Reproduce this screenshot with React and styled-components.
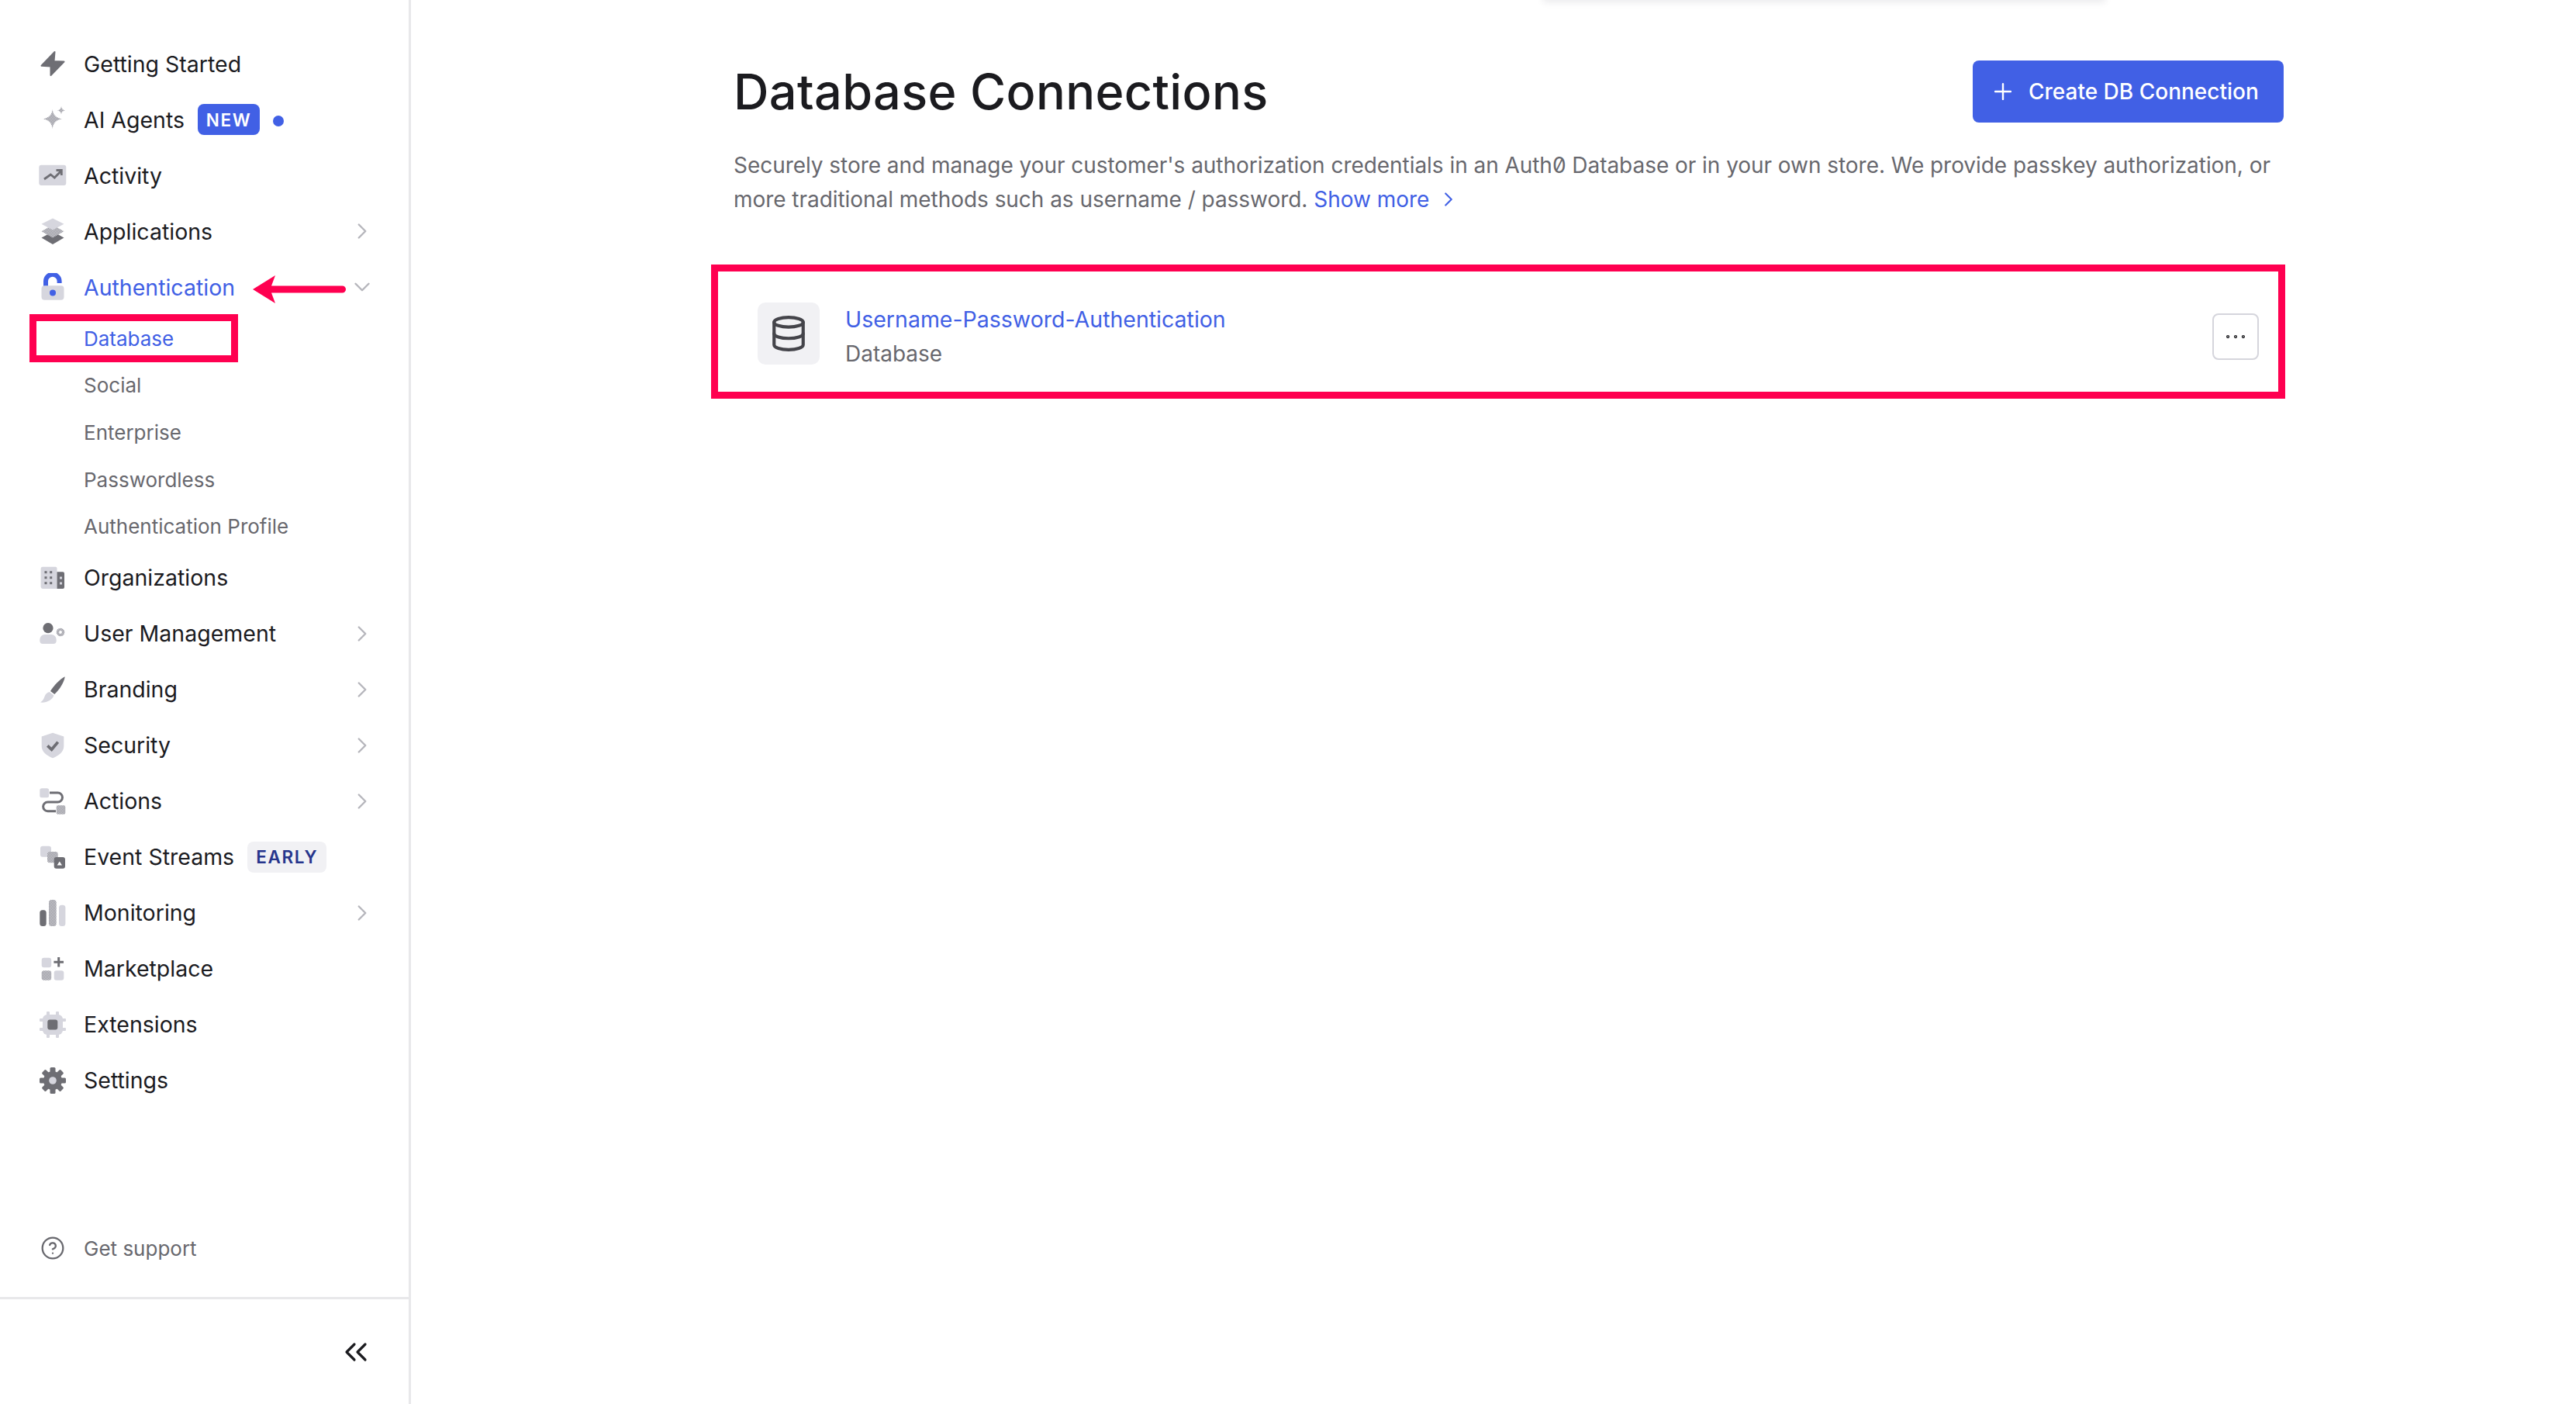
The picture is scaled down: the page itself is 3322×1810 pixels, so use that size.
import React from "react";
import styled, { createGlobalStyle } from "styled-components";
import { ChevronRight, ChevronDown, CircleHelp, Database, Plus, Ellipsis, ChevronsLeft } from "lucide-react";

const DARK = "#6e6e74";
const LIGHT = "#d6d6de";
const BLUE = "#4160e5";
const RED = "#ff0050";
const DOT = "url(#dither)";

const Global = createGlobalStyle`
  html, body { margin: 0; padding: 0; background: #fff; }
  body { font-family: Inter, "Noto Sans", sans-serif; color: #1b1b1f; }
  * { box-sizing: border-box; }
`;

const Page = styled.div`
  display: flex;
  width: 3322px;
  height: 1810px;
  overflow: hidden;
  position: relative;
`;
const Sidebar = styled.aside`
  width: 530px;
  flex: none;
  display: flex;
  flex-direction: column;
  border-right: 3px solid #e8e8ea;
`;
const Nav = styled.nav`
  display: flex;
  flex-direction: column;
  padding-top: 46px;
`;
const Row = styled.div`
  position: relative;
  height: 72px;
  display: flex;
  align-items: center;
  padding: 0 43px 0 50px;
  font-size: 28.5px;
  color: ${(p) => (p.$active ? BLUE : "#1b1b1f")};
`;
const IconBox = styled.svg`
  width: 36px;
  height: 36px;
  flex: none;
  margin-right: 22px;
`;
const Trail = styled.span`
  margin-left: auto;
  display: flex;
  color: #b6b6bc;
`;
const NewBadge = styled.span`
  margin-left: 17px;
  height: 40px;
  width: 80px;
  display: flex;
  align-items: center;
  justify-content: center;
  border-radius: 8px;
  background: ${BLUE};
  color: #fff;
  font-size: 22.5px;
  font-weight: 600;
  letter-spacing: 1.6px;
`;
const EarlyBadge = styled(NewBadge)`
  width: 102px;
  background: #f1f1f4;
  color: #26358c;
`;
const Dot = styled.span`
  width: 14px;
  height: 14px;
  border-radius: 50%;
  background: ${BLUE};
  margin-left: 17px;
  margin-top: 3px;
`;
const SubRow = styled.div`
  position: relative;
  height: 60.6px;
  display: flex;
  align-items: center;
  padding-left: 108px;
  font-size: 26px;
  color: ${(p) => (p.$active ? BLUE : "#68686e")};
`;
const SideMark = styled.div`
  position: absolute;
  left: 38px;
  top: -1px;
  width: 269px;
  height: 62px;
  border: 9px solid ${RED};
`;
const ArrowMark = styled.svg`
  position: absolute;
  left: 326px;
  top: 21px;
  width: 120px;
  height: 36px;
`;
const Support = styled.div`
  margin-top: auto;
  height: 126px;
  display: flex;
  align-items: center;
  padding: 0 0 0 50px;
  font-size: 26px;
  color: #68686e;
`;
const SupportIcon = styled.span`
  width: 36px;
  display: flex;
  justify-content: center;
  margin-right: 22px;
`;
const Collapse = styled.div`
  height: 138px;
  border-top: 3px solid #e8e8ea;
  display: flex;
  align-items: center;
  justify-content: flex-end;
  padding-right: 44px;
  color: #1b1b1f;
`;
const Main = styled.main`
  flex: 1;
  padding: 78px 377px 0 416px;
`;
const TopShadow = styled.div`
  position: absolute;
  top: -20px;
  left: 1990px;
  width: 725px;
  height: 20px;
  background: #fff;
  box-shadow: 0 3px 10px rgba(30, 30, 50, 0.09);
`;
const Header = styled.header`
  display: flex;
  align-items: center;
  justify-content: space-between;
  height: 80px;
`;
const Title = styled.h1`
  margin: 0;
  font-size: 63px;
  font-weight: 500;
  letter-spacing: 0.35px;
  color: #1b1b1f;
`;
const CreateButton = styled.button`
  width: 401px;
  height: 80px;
  border: 0;
  border-radius: 8px;
  background: ${BLUE};
  color: #fff;
  font: 500 28px Inter, sans-serif;
  display: flex;
  align-items: center;
  padding: 0 0 0 22px;
  gap: 16px;
`;
const Description = styled.div`
  margin-top: 33px;
  font-size: 28px;
  line-height: 44px;
  letter-spacing: -0.045px;
  color: #68686e;
  font-feature-settings: "zero";
`;
const DescLine = styled.div`
  display: flex;
  align-items: center;
  gap: 8px;
  white-space: nowrap;
`;
const ShowMore = styled.a`
  color: ${BLUE};
  display: inline-flex;
  align-items: center;
  gap: 10px;
`;
const Card = styled.section`
  position: relative;
  margin-top: 71px;
  height: 155px;
  display: flex;
  align-items: center;
  padding: 0 32px 0 31px;
`;
const CardMark = styled.div`
  position: absolute;
  inset: -9px -2px -9px -29px;
  border: 9px solid ${RED};
`;
const DbIcon = styled.div`
  width: 80px;
  height: 80px;
  margin-top: 5px;
  border-radius: 10px;
  background: #f1f1f4;
  color: #44444a;
  display: flex;
  align-items: center;
  justify-content: center;
`;
const CardText = styled.div`
  margin-left: 33px;
  display: flex;
  flex-direction: column;
  gap: 10px;
  margin-top: 12px;
`;
const CardLink = styled.a`
  color: ${BLUE};
  font-size: 28.5px;
  line-height: 34px;
`;
const CardSub = styled.span`
  color: #68686e;
  font-size: 28px;
  line-height: 34px;
`;
const MenuButton = styled.button`
  margin-left: auto;
  margin-top: 13px;
  width: 60px;
  height: 60px;
  padding: 0;
  border: 2px solid #d5d5dc;
  border-radius: 8px;
  background: #fff;
  color: #1b1b1f;
  display: flex;
  align-items: center;
  justify-content: center;
`;
const Defs = styled.svg`
  position: absolute;
  width: 0;
  height: 0;
`;

const Ico = ({ children }) => <IconBox viewBox="0 0 36 36">{children}</IconBox>;

const gearTeeth = [0, 45, 90, 135, 180, 225, 270, 315];
const chipPins = [12, 24];

const icons = {
  bolt: (
    <Ico>
      <path d="M20.5 3 3.5 20.8 15.5 21.5 15.5 33 32.5 15.5 19.5 15Z" fill={DARK} stroke={DARK} strokeWidth="2" strokeLinejoin="round" />
    </Ico>
  ),
  spark: (
    <Ico>
      <path d="M17.7 5C18.5 12 22 16 30 17.3 22 18.6 18.5 23 17.7 30 16.9 23 13 18.6 5.5 17.3 13 16 16.9 12 17.7 5Z" fill={DOT} />
      <path d="M29 1C29.3 4 30.8 5.7 34 6.3 30.8 6.9 29.3 8.5 29 11.5 28.7 8.5 27.2 6.9 24 6.3 27.2 5.7 28.7 4 29 1Z" fill={DOT} />
    </Ico>
  ),
  activity: (
    <Ico>
      <rect x="0.3" y="4.7" width="35" height="26.3" rx="3" fill={LIGHT} />
      <path d="M7 23 15.3 17 20.3 21 28.7 12.5M22.5 11.5H29.3V18" fill="none" stroke={DARK} strokeWidth="2.8" />
    </Ico>
  ),
  apps: (
    <Ico>
      <path d="M18 18.5 32.5 26.5 18 35 3.5 26.5Z" fill={DARK} />
      <path d="M18 10 32.5 18.3 18 26.5 3.5 18.3Z" fill={DOT} />
      <path d="M18 1.5 32.5 8.8 18 16.5 3.5 8.8Z" fill={LIGHT} />
    </Ico>
  ),
  auth: (
    <Ico>
      <path d="M9 18V10.5a8.8 8.8 0 0 1 17.6 0V13" fill="none" stroke={BLUE} strokeWidth="6" />
      <rect x="3.5" y="16.3" width="29" height="18.5" rx="4" fill={LIGHT} />
      <circle cx="18" cy="25.5" r="4" fill={BLUE} />
    </Ico>
  ),
  orgs: (
    <Ico>
      <path d="M5 3.7H21.5a2 2 0 0 1 2 2V32H5a2.4 2.4 0 0 1-2.4-2.4V6a2.4 2.4 0 0 1 2.4-2.3Z" fill={LIGHT} />
      <path d="M23.5 10.3H31a2 2 0 0 1 2 2V30a2 2 0 0 1-2 2H23.5Z" fill={DARK} />
      {[7.5, 14.2].map((x) => [9.2, 16.2, 23.2].map((y) => <rect key={`${x}${y}`} x={x} y={y} width="3" height="3" fill={DARK} />))}
      <rect x="27" y="16.5" width="3" height="3" fill={LIGHT} />
      <rect x="27" y="23.5" width="3" height="3" fill={LIGHT} />
    </Ico>
  ),
  users: (
    <Ico>
      <circle cx="12" cy="10.7" r="6.6" fill={DARK} />
      <path d="M1.3 26A6.5 6.5 0 0 1 8 19H16A6.5 6.5 0 0 1 22.7 26V27A4 4 0 0 1 18.7 31H5.3A4 4 0 0 1 1.3 27Z" fill={LIGHT} />
      <circle cx="28" cy="16" r="3.6" fill="none" stroke={DOT} strokeWidth="3.4" />
    </Ico>
  ),
  brush: (
    <Ico>
      <path d="M33.7 1.3C33 8 27 18 20.3 24L15 20C20 12 27 5 33.7 1.3Z" fill={DARK} />
      <path d="M13.8 21 19.5 25.5C18 31 10 35.5 2 34.5 5.5 32 6.5 30 7.5 27 8.5 23.5 11 21.5 13.8 21Z" fill={LIGHT} />
    </Ico>
  ),
  shield: (
    <Ico>
      <path d="M18 1.7 32.3 6.5V19C32.3 26.5 25 31.5 18 34.3 11 31.5 3.7 26.5 3.7 19V6.5Z" fill={LIGHT} />
      <path d="M11.3 18.3 16.6 23.3 24.7 13.6" fill="none" stroke={DARK} strokeWidth="3.8" />
    </Ico>
  ),
  actions: (
    <Ico>
      <path d="M14 7H24.5a6 6 0 0 1 0 12H11.5a5.8 5.8 0 0 0 0 11.7H22" fill="none" stroke={DARK} strokeWidth="3" />
      <rect x="1.3" y="1.3" width="11.8" height="12" rx="2.5" fill={LIGHT} />
      <rect x="22.7" y="23.3" width="11.6" height="11.4" rx="2" fill={DOT} />
    </Ico>
  ),
  streams: (
    <Ico>
      <rect x="2" y="3.7" width="14" height="14" rx="3" fill={LIGHT} />
      <rect x="11" y="11" width="13.7" height="14.2" rx="3" fill={DOT} />
      <rect x="19.7" y="18" width="14.3" height="14.7" rx="3" fill={DARK} />
      <path d="M26.8 23.5 30 28.5H23.6Z" fill="#fff" />
    </Ico>
  ),
  monitor: (
    <Ico>
      <rect x="1.3" y="14.3" width="8.4" height="20.7" rx="3.5" fill={DARK} />
      <rect x="13" y="1" width="9.7" height="34" rx="3.5" fill={DOT} />
      <rect x="26" y="7.7" width="8.4" height="27.3" rx="3.5" fill={LIGHT} />
    </Ico>
  ),
  market: (
    <Ico>
      <rect x="3.7" y="3.7" width="12.5" height="12.5" rx="3" fill={LIGHT} />
      <rect x="3.7" y="20.3" width="12.5" height="12.5" rx="3" fill={DOT} />
      <rect x="19.7" y="20.3" width="12.6" height="12.5" rx="3" fill={LIGHT} />
      <path d="M25.7 3V15.6M19.4 9.3H32" stroke={DARK} strokeWidth="3" />
    </Ico>
  ),
  chip: (
    <Ico>
      {chipPins.map((p) => (
        <g key={p} fill={LIGHT}>
          <rect x={p - 2} y="1" width="4" height="34" rx="1" />
          <rect x="1" y={p - 2} width="34" height="4" rx="1" />
        </g>
      ))}
      <rect x="5" y="5" width="26" height="26" rx="6" fill={LIGHT} />
      <rect x="11.3" y="11.5" width="13" height="13" rx="3" fill={DARK} />
    </Ico>
  ),
  gear: (
    <Ico>
      {gearTeeth.map((a) => (
        <rect key={a} x="14.5" y="1" width="7" height="8" rx="1.5" fill={DARK} transform={`rotate(${a} 18 18)`} />
      ))}
      <circle cx="18" cy="18" r="12" fill={DARK} />
      <circle cx="18" cy="18" r="4.8" fill={LIGHT} />
    </Ico>
  ),
};

const More = () => (
  <Trail>
    <ChevronRight size={34} strokeWidth={1.7} />
  </Trail>
);

const subItems = ["Database", "Social", "Enterprise", "Passwordless", "Authentication Profile"];

export default function App() {
  return (
    <Page>
      <Global />
      <Defs aria-hidden="true">
        <defs>
          <pattern id="dither" width="2" height="2" patternUnits="userSpaceOnUse">
            <rect width="2" height="2" fill="#cfcfd6" />
            <rect width="1" height="1" fill="#96969c" />
            <rect x="1" y="1" width="1" height="1" fill="#96969c" />
          </pattern>
        </defs>
      </Defs>
      <Sidebar>
        <Nav>
          <Row>{icons.bolt}Getting Started</Row>
          <Row>
            {icons.spark}AI Agents<NewBadge>NEW</NewBadge>
            <Dot />
          </Row>
          <Row>{icons.activity}Activity</Row>
          <Row>
            {icons.apps}Applications
            <More />
          </Row>
          <Row $active>
            {icons.auth}Authentication
            <ArrowMark viewBox="0 0 120 36">
              <path d="M0 18 29 0 24 13.5H115.5a4.5 4.5 0 0 1 0 9H24L29 36Z" fill={RED} />
            </ArrowMark>
            <Trail>
              <ChevronDown size={34} strokeWidth={1.7} />
            </Trail>
          </Row>
          {subItems.map((s, i) => (
            <SubRow key={s} $active={i === 0}>
              {s}
              {i === 0 && <SideMark />}
            </SubRow>
          ))}
          <Row>{icons.orgs}Organizations</Row>
          <Row>
            {icons.users}User Management
            <More />
          </Row>
          <Row>
            {icons.brush}Branding
            <More />
          </Row>
          <Row>
            {icons.shield}Security
            <More />
          </Row>
          <Row>
            {icons.actions}Actions
            <More />
          </Row>
          <Row>
            {icons.streams}Event Streams<EarlyBadge>EARLY</EarlyBadge>
          </Row>
          <Row>
            {icons.monitor}Monitoring
            <More />
          </Row>
          <Row>{icons.market}Marketplace</Row>
          <Row>{icons.chip}Extensions</Row>
          <Row>{icons.gear}Settings</Row>
        </Nav>
        <Support>
          <SupportIcon>
            <CircleHelp size={32} strokeWidth={1.7} />
          </SupportIcon>
          Get support
        </Support>
        <Collapse>
          <ChevronsLeft size={48} strokeWidth={1.6} />
        </Collapse>
      </Sidebar>
      <Main>
        <TopShadow />
        <Header>
          <Title>Database Connections</Title>
          <CreateButton>
            <Plus size={34} strokeWidth={1.7} />
            Create DB Connection
          </CreateButton>
        </Header>
        <Description>
          <DescLine>Securely store and manage your customer's authorization credentials in an Auth0 Database or in your own store. We provide passkey authorization, or</DescLine>
          <DescLine>
            <span>more traditional methods such as username / password.</span>
            <ShowMore>
              Show more
              <ChevronRight size={30} strokeWidth={1.7} />
            </ShowMore>
          </DescLine>
        </Description>
        <Card>
          <DbIcon>
            <Database size={50} strokeWidth={2} />
          </DbIcon>
          <CardText>
            <CardLink>Username-Password-Authentication</CardLink>
            <CardSub>Database</CardSub>
          </CardText>
          <MenuButton>
            <Ellipsis size={34} strokeWidth={1} />
          </MenuButton>
          <CardMark />
        </Card>
      </Main>
    </Page>
  );
}
